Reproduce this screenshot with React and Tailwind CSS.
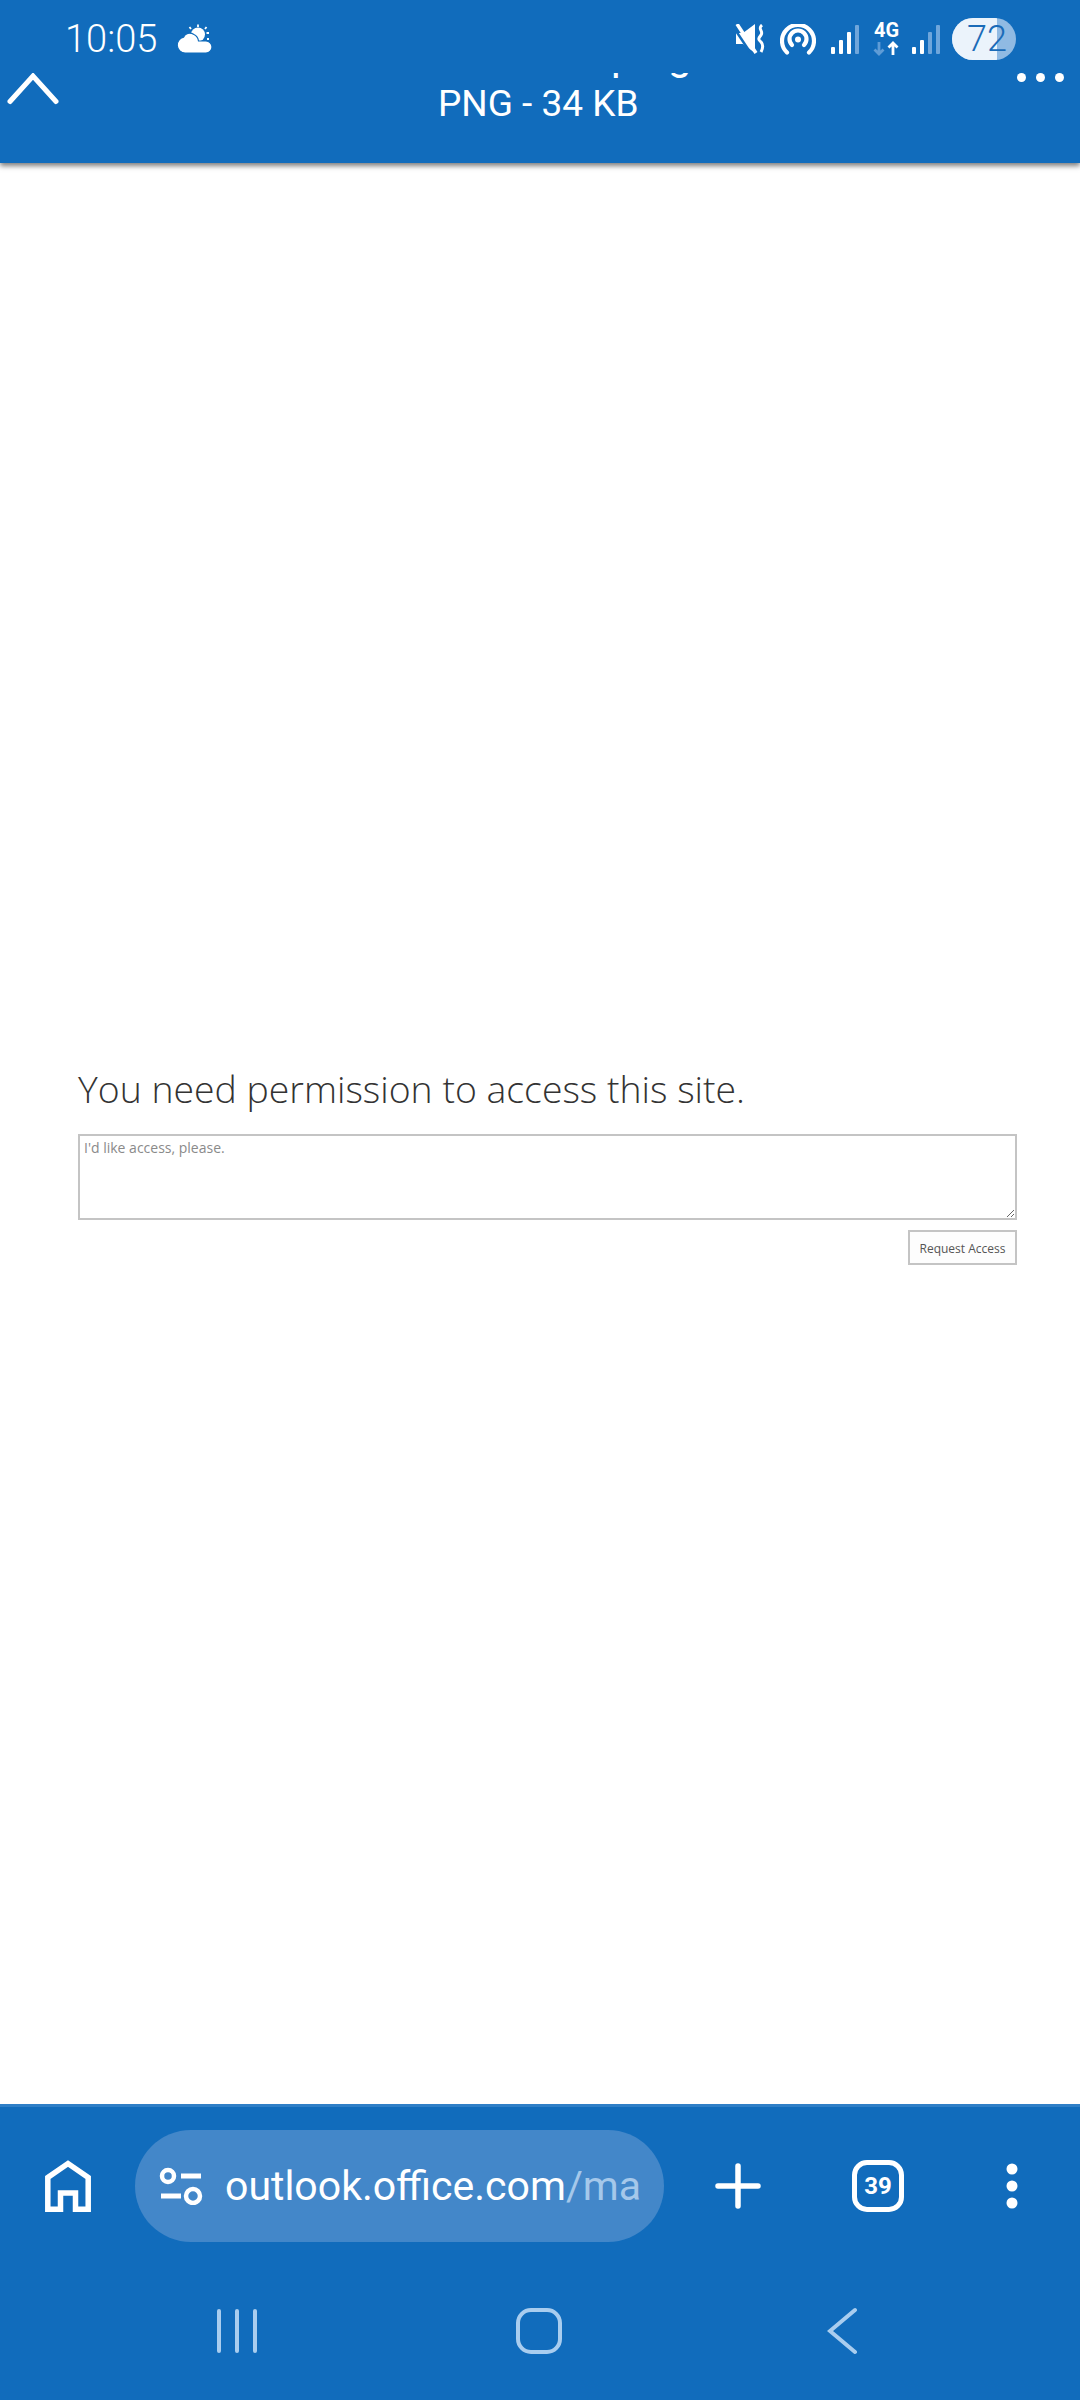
const roboto = { fontFamily: "Roboto, sans-serif" };

function Weather() {
  return (
    <svg width="36" height="30" viewBox="0 0 36 30" className="ml-[22px]" fill="white">
      <circle cx="22" cy="10.5" r="7" />
      <path d="M9 29a8 8 0 0 1-1.500-15.800C9 9 14 8 18 10.500a8.500 8.500 0 0 1 4.500 6.500h7.500a6 6 0 0 1 0 12z" stroke="#116cbc" strokeWidth="1.200" />
      <path d="M22 0.500v2.500M13.500 3l1.500 2M30.500 3l-1.500 2M33 9h-2.500M33 15h-2" stroke="white" strokeWidth="1.800" fill="none" />
    </svg>
  );
}

function Mute() {
  return (
    <svg width="30" height="30" viewBox="0 0 30 30" fill="white">
      <path d="M1 9h7L20 0v29L8 20H1z" />
      <path d="M-1 4L17 31" stroke="#116cbc" strokeWidth="2.500" />
      <path d="M2 0l19 29" stroke="white" strokeWidth="3.500" />
      <path d="M27 1c-5 4 2 6-1 10s-3 4 0 7 2 6 0 10" stroke="white" strokeWidth="3" fill="none" />
    </svg>
  );
}

function Hotspot() {
  return (
    <svg width="36" height="31" viewBox="0 0 36 31" fill="none" stroke="white" strokeWidth="4.200" strokeLinecap="round">
      <path d="M7 28.500a16 16 0 1 1 22 0" />
      <path d="M12 21a8.500 8.500 0 1 1 12 0" />
      <circle cx="18" cy="15.500" r="3" fill="white" stroke="none" />
    </svg>
  );
}

function Signal({ dim }) {
  const bars = [
    [0, 22, 7],
    [8, 15, 14],
    [16, 7, 22],
    [24, 0, 29],
  ];
  return (
    <svg width="28" height="29" viewBox="0 0 28 29">
      {bars.map(([x, y, h], i) => (
        <rect key={x} x={x} y={y} width="4" height={h} rx="1" fill={i < dim ? "#ffffff" : "#6fa6db"} />
      ))}
    </svg>
  );
}

function FourG() {
  return (
    <div className="relative w-[27px] h-[34px] flex flex-col items-center">
      <span className="text-[20px] leading-[17px] font-bold text-white whitespace-nowrap" style={roboto}>4G</span>
      <svg width="27" height="15" viewBox="0 0 27 15" fill="none" strokeWidth="2.800" className="mt-[2px]">
        <path d="M6 1v12M1.500 8.500L6 13l4.500-4.500" stroke="#5f9cd6" />
        <path d="M20 14V2M15.500 6.500L20 2l4.500 4.500" stroke="white" />
      </svg>
    </div>
  );
}

function Battery() {
  return (
    <div className="relative w-[64px] h-[42px] rounded-full overflow-hidden bg-[#90bae3] flex items-center">
      <div className="w-[45px] h-full bg-[#ebf3fb]" />
      <span className="absolute left-[15px] top-0 text-[36px] leading-[42px] font-light text-[#1a6bb8]" style={roboto}>72</span>
    </div>
  );
}

function Chevron() {
  return (
    <svg width="52" height="32" viewBox="0 0 52 32" fill="none" stroke="white" strokeWidth="5" strokeLinecap="round" className="ml-[7px] shrink-0">
      <path d="M3 28.500L26 3l23 25.500" />
    </svg>
  );
}

function Home() {
  return (
    <svg width="46" height="52" viewBox="0 0 46 52" fill="none" stroke="white" strokeWidth="5.500">
      <path d="M2.800 49.200V17.500L23 3.500l20.200 14v31.700H30.500V33h-15v16.200z" />
    </svg>
  );
}

function Tune() {
  return (
    <svg width="44" height="38" viewBox="0 0 44 38" fill="none" stroke="white" strokeWidth="4.500">
      <circle cx="9" cy="9" r="6" />
      <path d="M22 9h20M2 29h20" strokeWidth="5" />
      <circle cx="34" cy="29" r="7" />
    </svg>
  );
}

function Plus() {
  return (
    <svg width="46" height="46" viewBox="0 0 46 46" fill="none" stroke="white" strokeWidth="5.500" strokeLinecap="round">
      <path d="M23 3v40M3 23h40" />
    </svg>
  );
}

function Kebab() {
  return (
    <svg width="14" height="46" viewBox="0 0 14 46" fill="white">
      <circle cx="7" cy="6" r="5.500" />
      <circle cx="7" cy="23" r="5.500" />
      <circle cx="7" cy="40" r="5.500" />
    </svg>
  );
}

export default function App() {
  return (
    <div className="w-[1080px] h-[2400px] flex flex-col bg-white overflow-hidden" style={roboto}>
      <header className="h-[163px] shrink-0 bg-[#116cbc] flex flex-col shadow-[0_3px_5px_rgba(0,0,0,0.5)] relative">
        <div className="h-[73px] shrink-0 flex items-center pl-[65px] pr-[64px] pt-[5px]">
          <span className="text-[38px] leading-none text-white w-[89px] whitespace-nowrap" style={{ fontWeight: 350 }}>10:05</span>
          <Weather />
          <div className="ml-auto flex items-center">
            <Mute />
            <div className="ml-[15px]"><Hotspot /></div>
            <div className="ml-[15px]"><Signal dim={3} /></div>
            <div className="ml-[14px]"><FourG /></div>
            <div className="ml-[12px]"><Signal dim={2} /></div>
            <div className="ml-[12px]"><Battery /></div>
          </div>
        </div>
        <div className="flex items-start pr-[16px]">
          <Chevron />
          <div className="flex-1 flex flex-col">
            <div className="h-[11px] overflow-hidden pl-[552px]">
              <div className="text-[42px] leading-[42px] text-white mt-[-39px]">ping</div>
            </div>
            <div className="text-[37px] leading-[40px] text-white pl-[379px]">PNG - 34 KB</div>
          </div>
          <div className="flex items-center gap-[10px]">
            <span className="w-[9px] h-[9px] rounded-full bg-white" />
            <span className="w-[9px] h-[9px] rounded-full bg-white" />
            <span className="w-[9px] h-[9px] rounded-full bg-white" />
          </div>
        </div>
      </header>

      <main className="flex-1 px-[78px] pr-[63px] pt-[898px]" style={{ fontFamily: "'Open Sans', sans-serif" }}>
        <h1 className="text-[37.400px] leading-[56px] font-light text-[#333333]">You need permission to access this site.</h1>
        <textarea
          readOnly
          placeholder="I'd like access, please."
          className="block mt-[17px] w-full h-[86px] border-2 border-[#c4c4c4] px-[4px] py-[2px] text-[14px] leading-[20px] placeholder:text-[#8a8a8a] outline-none"
        />
        <div className="flex justify-end mt-[10px]">
          <button className="w-[109px] h-[35px] pt-[2px] border-2 border-[#c4c4c4] bg-[#fdfdfd] text-[12px] text-[#555555]">Request Access</button>
        </div>
      </main>

      <footer className="h-[296px] shrink-0 bg-[#116cbc] border-t-[3px] border-[#2f7fc7] flex flex-col">
        <div className="flex items-center h-[155px] pl-[45px] pt-[3px]">
          <Home />
          <div className="ml-[44px] w-[529px] h-[112px] rounded-full bg-[#4387c9] flex items-center pl-[24px]">
            <Tune />
            <span className="ml-[22px] text-[41px] leading-[50px] text-white whitespace-nowrap">
              outlook.office.com<span className="text-[#a5c8ea]">/ma</span>
            </span>
          </div>
          <div className="ml-[51px]"><Plus /></div>
          <div className="ml-[91px] w-[52px] h-[52px] rounded-[15px] border-[5px] border-white flex items-center justify-center">
            <span className="text-[24px] font-bold leading-none text-white">39</span>
          </div>
          <div className="ml-[101px]"><Kebab /></div>
        </div>
        <div className="flex-1 flex items-center">
          <div className="ml-[217px] flex gap-[14px]">
            <span className="w-[4px] h-[44px] rounded-full bg-[#a9cdef]" />
            <span className="w-[4px] h-[44px] rounded-full bg-[#a9cdef]" />
            <span className="w-[4px] h-[44px] rounded-full bg-[#a9cdef]" />
          </div>
          <div className="ml-[259px] w-[46px] h-[46px] rounded-[15px] border-[4px] border-[#a9cdef]" />
          <svg width="32" height="48" viewBox="0 0 32 48" fill="none" stroke="#a9cdef" strokeWidth="4" strokeLinecap="round" className="ml-[265px]">
            <path d="M28 3L3 24l25 21" />
          </svg>
        </div>
      </footer>
    </div>
  );
}
